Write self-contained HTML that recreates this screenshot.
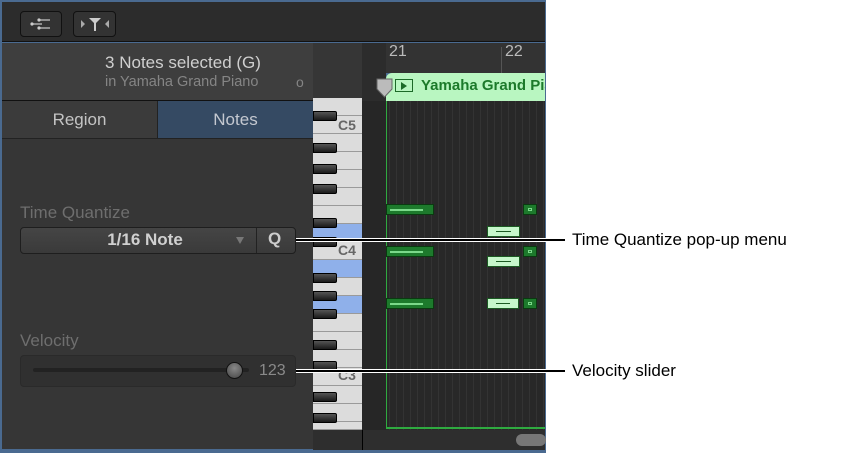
<!DOCTYPE html>
<html><head><meta charset="utf-8"><style>
*{margin:0;padding:0;box-sizing:border-box}
body{width:866px;height:454px;background:#fff;position:relative;overflow:hidden;font-family:"Liberation Sans",sans-serif}
.a{position:absolute}
.wk{position:absolute;left:313px;width:49px;height:18px;background:#dcdcdc;border-bottom:1px solid #9a9a9a}
.bk{position:absolute;left:313px;width:24px;height:10px;background:linear-gradient(#555,#1a1a1a);border:1px solid #000;border-radius:0 2px 2px 0}
.n{position:absolute;height:11px;background:#1d7a2c;border:1px solid #0a3a10}
.n i{position:absolute;left:3px;right:10px;top:4px;height:2px;background:#7bd98a}
.l{position:absolute;height:11px;background:#c6f7cb;border:1px solid #1b5a22}
.l i{position:absolute;left:8px;right:8px;top:4px;height:1px;background:#1b5a22}
.s{position:absolute;width:14px;height:11px;background:#1d7a2c;border:1px solid #0a3a10}
.s i{position:absolute;left:4px;top:3px;width:4px;height:3px;border:1px solid #7bd98a}
.cl{position:absolute;height:4px;background:#000;border-top:1px solid #fff;border-bottom:1px solid #fff;left:296px;width:269px}
.ct{position:absolute;left:572px;font-size:17px;color:#000}
</style></head><body>
<div class="a" style="left:0;top:0;width:546px;height:453px;background:#4a6a90"></div>
<div class="a" style="left:2px;top:2px;width:543px;height:40px;background:#2c2c2c;border-bottom:1px solid #111"></div>
<div class="a" style="left:20px;top:11px;width:42px;height:26px;border:1px solid #111;border-radius:4px;background:#333"></div>
<svg class="a" style="left:28px;top:16px" width="26" height="16"><g stroke="#ccc" stroke-width="1.2"><line x1="12" y1="4" x2="22" y2="4"/><line x1="4" y1="8" x2="14" y2="8"/><line x1="12" y1="12" x2="22" y2="12"/></g><g fill="#ccc"><circle cx="11" cy="4" r="1.6"/><circle cx="4" cy="8" r="1.6"/><circle cx="11" cy="12" r="1.6"/></g></svg>
<div class="a" style="left:73px;top:11px;width:43px;height:26px;border:1px solid #111;border-radius:4px;background:#333"></div>
<svg class="a" style="left:80px;top:15px" width="30" height="18"><path d="M1 5L5 9L1 13Z M29 5L25 9L29 13Z" fill="#aaa"/><path d="M9 3H21L16 8V16H14V8Z" fill="#ccc"/></svg>
<div class="a" style="left:2px;top:43px;width:311px;height:58px;background:#3e3e3e;border-bottom:1px solid #111"></div>
<div class="a" style="left:2px;top:53px;width:362px;text-align:center;font-size:17px;color:#cfcfcf">3 Notes selected (G)</div>
<div class="a" style="left:105px;top:74px;font-size:14.5px;color:#858585">in Yamaha Grand Piano</div>
<div class="a" style="left:296px;top:74px;font-size:14px;color:#858585">o</div>
<div class="a" style="left:2px;top:101px;width:156px;height:38px;background:#3b3b3b;border-bottom:1px solid #222;border-right:1px solid #222;color:#c4c4c4;font-size:17px;text-align:center;line-height:37px">Region</div>
<div class="a" style="left:158px;top:101px;width:155px;height:38px;background:#354a63;border-bottom:1px solid #222;color:#c4c8d0;font-size:17px;text-align:center;line-height:37px">Notes</div>
<div class="a" style="left:2px;top:139px;width:311px;height:310px;background:#363636"></div>
<div class="a" style="left:20px;top:203px;font-size:17px;color:#6e6e6e">Time Quantize</div>
<div class="a" style="left:20px;top:227px;width:276px;height:27px;border:1px solid #1e1e1e;border-radius:4px;background:linear-gradient(#454545,#3a3a3a)"></div>
<div class="a" style="left:20px;top:230px;width:250px;text-align:center;font-size:17px;font-weight:bold;color:#d0d0d0">1/16 Note</div>
<div class="a" style="left:236px;top:237px;width:0;height:0;border-left:4px solid transparent;border-right:4px solid transparent;border-top:7px solid #777"></div>
<div class="a" style="left:256px;top:228px;width:1px;height:25px;background:#222"></div>
<div class="a" style="left:268px;top:229px;font-size:17px;font-weight:bold;color:#ccc">Q</div>
<div class="a" style="left:20px;top:331px;font-size:17px;color:#6e6e6e">Velocity</div>
<div class="a" style="left:20px;top:355px;width:276px;height:32px;border:1px solid #2a2a2a;border-radius:4px;background:#303030"></div>
<div class="a" style="left:33px;top:368px;width:216px;height:4px;border-radius:2px;background:#222"></div>
<div class="a" style="left:226px;top:362px;width:17px;height:17px;border-radius:50%;background:radial-gradient(circle at 50% 35%,#888,#444);border:1px solid #111"></div>
<div class="a" style="left:259px;top:362px;font-size:16px;color:#8a8a8a">123</div>
<div class="a" style="left:313px;top:43px;width:50px;height:58px;background:#363636;border-right:1px solid #111"></div>
<div class="a" style="left:313px;top:101px;width:49px;height:329px;background:#dcdcdc"></div>
<div class="wk" style="top:98px"></div><div class="wk" style="top:116px"></div><div class="wk" style="top:134px"></div><div class="wk" style="top:152px"></div><div class="wk" style="top:170px"></div><div class="wk" style="top:188px"></div><div class="wk" style="top:206px"></div>
<div class="wk" style="top:224px;background:#8fb0ea"></div><div class="wk" style="top:242px"></div><div class="wk" style="top:260px;background:#8fb0ea"></div><div class="wk" style="top:278px"></div><div class="wk" style="top:296px;background:#8fb0ea"></div><div class="wk" style="top:314px"></div><div class="wk" style="top:332px"></div><div class="wk" style="top:350px"></div><div class="wk" style="top:368px"></div><div class="wk" style="top:386px"></div><div class="wk" style="top:404px"></div><div class="wk" style="top:422px;height:8px"></div>
<div class="a" style="left:313px;top:99px;width:49px;height:3px;background:#dcdcdc"></div>
<div class="bk" style="top:111px"></div><div class="bk" style="top:143px"></div><div class="bk" style="top:164px"></div><div class="bk" style="top:184px"></div><div class="bk" style="top:218px"></div><div class="bk" style="top:237px"></div><div class="bk" style="top:273px"></div><div class="bk" style="top:291px"></div><div class="bk" style="top:309px"></div><div class="bk" style="top:340px"></div><div class="bk" style="top:361px"></div><div class="bk" style="top:392px"></div><div class="bk" style="top:413px"></div>
<div class="a" style="left:338px;top:117px;font-size:14px;font-weight:bold;color:#666">C5</div>
<div class="a" style="left:338px;top:242px;font-size:14px;font-weight:bold;color:#666">C4</div>
<div class="a" style="left:338px;top:367px;font-size:14px;font-weight:bold;color:#666">C3</div>
<div class="a" style="left:362px;top:43px;width:183px;height:30px;background:#333"></div>
<div class="a" style="left:362px;top:43px;width:24px;height:58px;background:#2c2c2c"></div>
<div class="a" style="left:389px;top:43px;font-size:16px;color:#bbb">21</div>
<div class="a" style="left:501px;top:47px;width:1px;height:26px;background:#555"></div>
<div class="a" style="left:505px;top:43px;font-size:16px;color:#bbb">22</div>
<div class="a" style="left:386px;top:73px;width:159px;height:28px;background:#b9f6c1;border-radius:6px 0 0 0;overflow:hidden">
<div class="a" style="left:9px;top:6px;width:18px;height:13px;border:1px solid #1c6a28"></div>
<div class="a" style="left:15px;top:9px;width:0;height:0;border-top:4px solid transparent;border-bottom:4px solid transparent;border-left:6px solid #1c6a28"></div>
<div class="a" style="left:35px;top:4px;font-size:15px;font-weight:bold;color:#1c7a2a;white-space:nowrap">Yamaha Grand Piano</div>
</div>
<svg class="a" style="left:375px;top:78px" width="20" height="20"><path d="M2 1H17V11L9.5 19L2 11Z" fill="#bbb" stroke="#666"/></svg>
<div class="a" style="left:362px;top:101px;width:183px;height:329px;background:#282828;background-image:repeating-linear-gradient(90deg,transparent 0 6px,#333 6px 7px)"></div>
<div class="a" style="left:362px;top:101px;width:24px;height:329px;background:#262626"></div>
<div class="a" style="left:386px;top:101px;width:1px;height:328px;background:#2faa40"></div>
<div class="a" style="left:386px;top:427px;width:159px;height:2px;background:#2faa40"></div>
<div class="n" style="left:386px;top:204px;width:48px"><i></i></div>
<div class="s" style="left:523px;top:204px"><i></i></div>
<div class="l" style="left:487px;top:226px;width:33px"><i></i></div>
<div class="n" style="left:386px;top:246px;width:48px"><i></i></div>
<div class="s" style="left:523px;top:246px"><i></i></div>
<div class="l" style="left:487px;top:256px;width:33px"><i></i></div>
<div class="n" style="left:386px;top:298px;width:48px"><i></i></div>
<div class="l" style="left:487px;top:298px;width:32px"><i></i></div>
<div class="s" style="left:523px;top:298px"><i></i></div>
<div class="a" style="left:313px;top:430px;width:232px;height:20px;background:#2e2e2e"></div>
<div class="a" style="left:362px;top:430px;width:1px;height:20px;background:#000"></div>
<div class="a" style="left:516px;top:434px;width:30px;height:12px;border-radius:6px;background:#777"></div>
<div class="cl" style="top:238px"></div>
<div class="ct" style="top:230px">Time Quantize pop-up menu</div>
<div class="cl" style="top:369px"></div>
<div class="ct" style="top:361px">Velocity slider</div>
</body></html>
